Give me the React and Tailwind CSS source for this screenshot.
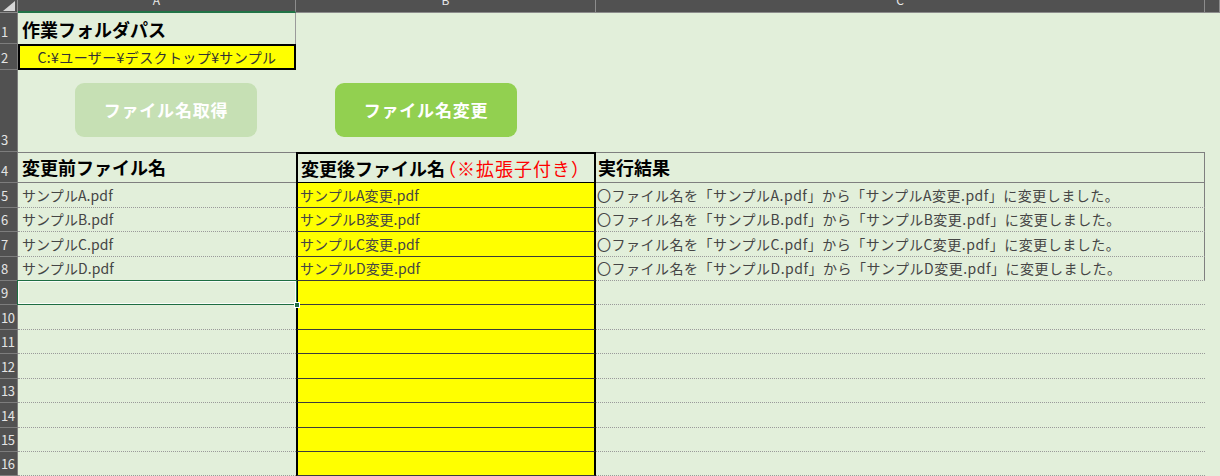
import React from 'react'

const FONT = "font-['Noto_Sans_CJK_JP','Noto_Sans',sans-serif]"

const dataRows = [
  { before: 'サンプルA.pdf', after: 'サンプルA変更.pdf', result: '〇ファイル名を「サンプルA.pdf」から「サンプルA変更.pdf」に変更しました。' },
  { before: 'サンプルB.pdf', after: 'サンプルB変更.pdf', result: '〇ファイル名を「サンプルB.pdf」から「サンプルB変更.pdf」に変更しました。' },
  { before: 'サンプルC.pdf', after: 'サンプルC変更.pdf', result: '〇ファイル名を「サンプルC.pdf」から「サンプルC変更.pdf」に変更しました。' },
  { before: 'サンプルD.pdf', after: 'サンプルD変更.pdf', result: '〇ファイル名を「サンプルD.pdf」から「サンプルD変更.pdf」に変更しました。' },
]

function RowHeader({ n }) {
  return (
    <div className="bg-[#515151] border-b border-r border-[#7d7d7d] flex items-end pb-[5px] pl-px text-[13px] leading-none text-[#e4e4e4] overflow-hidden tracking-[-0.5px]">
      {n}
    </div>
  )
}

function ColHeader({ label, active }) {
  return (
    <div
      className={
        'bg-[#515151] border-r border-[#8c8c8c] flex justify-center overflow-hidden text-[12px] leading-[12px] text-[#e8e8e8] ' +
        (active ? 'border-b-2 border-b-[#217346]' : 'border-b border-b-[#8c8c8c]')
      }
    >
      <span className="-mt-[6px]">{label}</span>
    </div>
  )
}

export default function App() {
  const rows = []
  for (let i = 0; i < 12; i++) {
    const n = i + 5
    const d = dataRows[i]
    const active = n === 9
    rows.push(
      <React.Fragment key={n}>
        <RowHeader n={n} />
        <div className="relative border-b border-dotted border-[#9a9a9a] flex items-center pl-[4px] text-[14px] tracking-[0.1px] text-[#454545] whitespace-nowrap">
          {d?.before}
          {active && (
            <div className="absolute -top-px -left-px -right-px -bottom-px z-10 border border-[#1e6e42] shadow-[inset_0_0_0_1px_rgba(255,255,255,0.85)]">
              <div className="absolute -bottom-[4px] -right-[4px] w-[6px] h-[6px] bg-[#1e6e42] border border-white" />
            </div>
          )}
        </div>
        <div className="bg-[#ffff00] border-l-2 border-r-2 border-b border-black border-b-[#3c3c3c] flex items-center pl-[2px] text-[14px] tracking-[0.1px] text-[#454545] whitespace-nowrap">
          {d?.after}
        </div>
        <div
          className={
            'border-b border-dotted border-[#9a9a9a] flex items-center pl-[1px] text-[14px] tracking-[0.5px] text-[#454545] whitespace-nowrap ' +
            (d ? 'shadow-[inset_-1px_0_0_#7f7f7f]' : '')
          }
        >
          {d?.result}
        </div>
        <div />
      </React.Fragment>
    )
  }

  return (
    <div className={`${FONT} w-[1220px] h-[476px] overflow-hidden bg-[#e2efda]`}>
      <div className="grid grid-cols-[18px_278px_300px_609px_1fr] grid-rows-[13px_31px_26px_82px_31px_25px_24px_25px_24px_24px_25px_24px_25px_24px_25px_24px_24px]">
        {/* column headers */}
        <div className="bg-[#515151] border-r border-b border-[#8c8c8c] flex items-end justify-end pr-[2px] pb-px">
          <svg width="12" height="10" viewBox="0 0 12 10">
            <polygon points="12,0 12,10 0,10" fill="#d6d6d6" />
          </svg>
        </div>
        <ColHeader label="A" active />
        <ColHeader label="B" />
        <ColHeader label="C" />
        <ColHeader label="" />

        {/* row 1 */}
        <RowHeader n={1} />
        <div className="border-r border-[#9a9a9a] flex items-center pl-[4px] pt-[2px] text-[18px] font-bold text-black">
          作業フォルダパス
        </div>
        <div />
        <div />
        <div />

        {/* row 2 */}
        <RowHeader n={2} />
        <div className="bg-[#ffff00] border-2 border-black flex items-center justify-center text-[14px] tracking-[0.4px] text-[#333333] whitespace-nowrap">
          C:¥ユーザー¥デスクトップ¥サンプル
        </div>
        <div />
        <div />
        <div />

        {/* row 3 - macro buttons */}
        <RowHeader n={3} />
        <div className="pl-[57px] pt-[13px]">
          <button className="w-[182px] h-[54px] rounded-[9px] bg-[#c6e0b4] text-white font-bold text-[17px] tracking-[0.8px]">
            ファイル名取得
          </button>
        </div>
        <div className="pl-[39px] pt-[13px]">
          <button className="w-[182px] h-[54px] rounded-[9px] bg-[#92d050] text-white font-bold text-[17px] tracking-[0.8px]">
            ファイル名変更
          </button>
        </div>
        <div />
        <div />

        {/* row 4 - table headers */}
        <RowHeader n={4} />
        <div className="border-t border-b border-[#7f7f7f] flex items-center pl-[4px] text-[18px] font-bold text-black">
          変更前ファイル名
        </div>
        <div className="border-t-2 border-l-2 border-r-2 border-b border-black flex items-center pl-[3px] text-[18px] font-bold text-black whitespace-nowrap">
          変更後ファイル名
          <span className="text-[#ff0000] font-normal tracking-[1px] -ml-[7px]">
            （※拡張子付き）
          </span>
        </div>
        <div className="border-t border-b border-r border-[#7f7f7f] flex items-center pl-[2px] text-[18px] font-bold text-black">
          実行結果
        </div>
        <div />

        {rows}
      </div>
    </div>
  )
}
